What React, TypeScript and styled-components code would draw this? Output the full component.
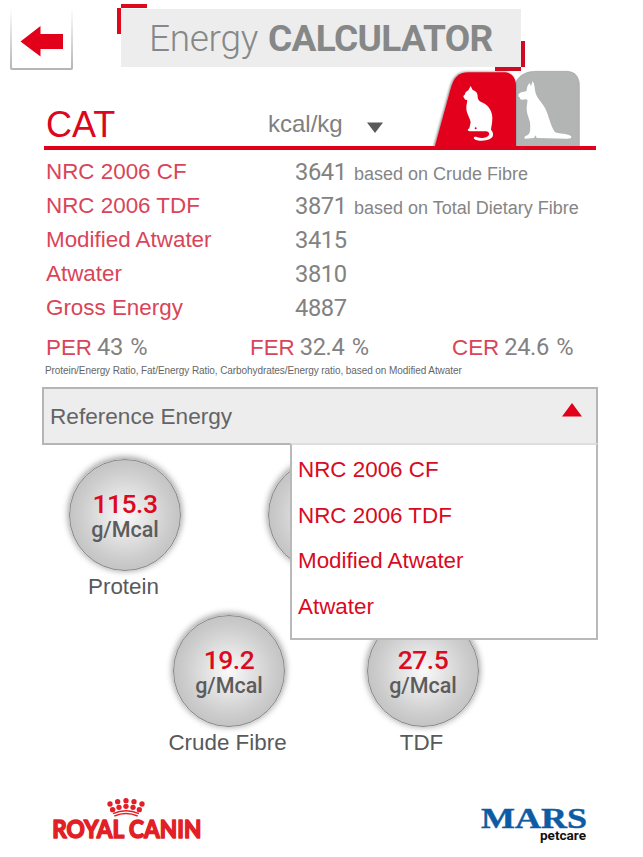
import React from "react";
import styled, { createGlobalStyle } from "styled-components";

const RED = "#e2001a";

const GlobalStyle = createGlobalStyle`
  * { box-sizing: border-box; }
  body { margin: 0; background: #fff; font-family: "Liberation Sans", Arial, sans-serif; }
`;

const Page = styled.main`
  width: 643px;
  height: 857px;
  background: #fff;
  overflow: hidden;
  display: flex;
  flex-direction: column;
`;

const Header = styled.header`
  height: 71px;
  padding: 8px 0 0 10px;
  display: flex;
  align-items: flex-start;
  flex: none;
`;

const BackButton = styled.button`
  width: 63px;
  height: 62px;
  padding: 0 2px 2px;
  border: 0;
  border-radius: 2px;
  background: linear-gradient(to bottom, #fff, #b4b4b4);
  svg { display: block; background: #fff; }
`;

const TitleBox = styled.div`
  position: relative;
  width: 400px;
  height: 58px;
  margin: 1px 0 0 48px;
  padding-left: 28px;
  background: #ededed;
  color: #868888;
  font: 300 37px/59px Roboto, sans-serif;
  white-space: nowrap;
  display: flex;
`;

const TitleLight = styled.span`
  font-weight: 300;
  letter-spacing: -0.3px;
  width: 119px;
`;

const TitleBold = styled.span`
  font-weight: 700;
  letter-spacing: -0.65px;
`;

const Corner = styled.i<{ $end?: boolean }>`
  position: absolute;
  width: 30px;
  height: 30px;
  ${(p) => (p.$end ? "right: -4px; bottom: -4px;" : "left: -4px; top: -5px;")}
  &::before, &::after {
    content: "";
    position: absolute;
    background: ${(p) => (p.$end ? "#cf0a22" : "#dd0a1e")};
  }
  &::before {
    width: 26px;
    height: 4px;
    ${(p) => (p.$end ? "left: 0; bottom: 0;" : "right: 0; top: 0;")}
  }
  &::after {
    width: 4px;
    height: 26px;
    ${(p) => (p.$end ? "right: 0; top: 0;" : "left: 0; bottom: 0;")}
  }
`;

const SpeciesBar = styled.section`
  height: 79px;
  margin: 0 47px 0 44px;
  border-bottom: 4px solid #df001c;
  display: flex;
  flex: none;
`;

const Species = styled.h1`
  margin: 0;
  width: 224px;
  padding-left: 2px;
  font-size: 36px;
  line-height: 40px;
  font-weight: 400;
  padding-top: 34px;
  color: #db0620;
`;

const Unit = styled.div`
  width: 118px;
  padding-top: 39px;
  display: flex;
  font-size: 24px;
  line-height: 28px;
  color: #808080;
  svg { margin: 12px 0 0 24px; flex: none; }
`;

const Tabs = styled.svg`
  display: block;
  margin: -6px 0 0 44px;
  flex: none;
`;

const Results = styled.section`
  padding: 5px 0 0 46px;
  flex: none;
`;

const ResultRow = styled.div`
  display: grid;
  grid-template-columns: 249px 59px auto;
  height: 34px;
  line-height: 33px;
  white-space: nowrap;
`;

const Label = styled.span`
  font-size: 22.4px;
  color: #d94558;
`;

const Value = styled.span`
  font: 450 23.7px/34px Roboto, sans-serif;
  letter-spacing: -0.4px;
  word-spacing: 2px;
  color: #828282;
`;

const Basis = styled.span`
  font-size: 18px;
  line-height: 38px;
  color: #858585;
`;

const Ratios = styled.div`
  display: grid;
  grid-template-columns: 204px 202px auto;
  height: 37px;
  padding-top: 5px;
  white-space: nowrap;
`;

const Ratio = styled.div`
  display: flex;
  gap: 5px;
  line-height: 35px;
`;

const Footnote = styled.p`
  margin: 2px 0 0 -1px;
  font-size: 10px;
  letter-spacing: -0.08px;
  line-height: 14px;
  color: #666;
`;

const Select = styled.section`
  position: relative;
  z-index: 2;
  width: 556px;
  height: 58px;
  margin: 9px 0 0 42px;
  padding: 0 14px 0 6px;
  border: 2px solid #b4b6b6;
  background: #ededed;
  display: flex;
  justify-content: space-between;
  color: #636466;
  font-size: 22.6px;
  line-height: 56px;
  flex: none;
  svg { margin-top: 14px; }
`;

const Menu = styled.ul`
  position: absolute;
  top: 54px;
  right: -2px;
  width: 308px;
  height: 197px;
  margin: 0;
  padding: 2px 0 0 6px;
  list-style: none;
  background: #fff;
  border: 2px solid #b8baba;
  border-top: 2px solid #dedede;
`;

const Option = styled.li`
  height: 45.5px;
  line-height: 45.5px;
  font-size: 22.4px;
  color: #d90a22;
`;

const Dials = styled.section<{ $indent: number; $gap: number; $top: number }>`
  display: flex;
  gap: ${(p) => p.$gap}px;
  padding: ${(p) => p.$top}px 0 0 ${(p) => p.$indent}px;
  height: ${(p) => 142 + p.$top}px;
  flex: none;
`;

const DialItem = styled.div`
  width: 112px;
  display: flex;
  flex-direction: column;
  align-items: center;
`;

const Dial = styled.div`
  width: 112px;
  height: 112px;
  border-radius: 50%;
  border: 1.5px solid #888;
  background: radial-gradient(circle closest-side, #fafafa 0%, #e6e6e6 35%, #cdcdcd 80%, #c4c4c4 100%);
  box-shadow: 0 -1px 6px 1px rgba(0, 0, 0, 0.38);
  display: flex;
  flex-direction: column;
  align-items: center;
  padding-top: 28px;
  flex: none;
  font-family: Roboto, sans-serif;
  font-weight: 500;
`;

const Amount = styled.span`
  font-size: 26.5px;
  line-height: 31px;
  letter-spacing: -0.5px;
  color: #dc0a20;
`;

const PerMcal = styled.span`
  font-size: 21.5px;
  line-height: 22px;
  color: #5c5c5c;
`;

const DialLabel = styled.span`
  margin: 2px 0 0 -3px;
  font-size: 22.4px;
  line-height: 28px;
  color: #58595b;
  white-space: nowrap;
`;

const Footer = styled.footer`
  display: flex;
  justify-content: space-between;
  padding: 0 53px 0 49px;
  margin-top: 37px;
`;

const results: [string, string, string?][] = [
  ["NRC 2006 CF", "3641", "based on Crude Fibre"],
  ["NRC 2006 TDF", "3871", "based on Total Dietary Fibre"],
  ["Modified Atwater", "3415"],
  ["Atwater", "3810"],
  ["Gross Energy", "4887"],
];

const ratios = [
  ["PER", "43 %"],
  ["FER", "32.4 %"],
  ["CER", "24.6 %"],
];

const options = ["NRC 2006 CF", "NRC 2006 TDF", "Modified Atwater", "Atwater"];

function Nutrient({ amount, label }: { amount?: string; label?: string }) {
  return (
    <DialItem>
      <Dial>
        {amount && (
          <>
            <Amount>{amount}</Amount>
            <PerMcal>g/Mcal</PerMcal>
          </>
        )}
      </Dial>
      {label && <DialLabel>{label}</DialLabel>}
    </DialItem>
  );
}

function SpeciesTabs() {
  return (
    <Tabs width="160" height="81" viewBox="0 0 480 243">
      <defs>
        <filter id="tabShadow" x="-10%" y="-10%" width="120%" height="120%">
          <feDropShadow dx="-3" dy="-1" stdDeviation="3" floodColor="#333" floodOpacity="0.6" />
        </filter>
      </defs>
      <path d="M258 246V50C270 28 292 19 320 19H408C434 19 448 34 448 62V246Z" fill="#b2b5b4" stroke="#9fa2a1" strokeWidth="2" />
      <path d="M14 246L61 74C71 38 84 22 116 22H220C247 22 258 38 258 64V246Z" fill={RED} filter="url(#tabShadow)" />
      <path
        fill="#fff"
        d="M122 63L128 75C138 78 144 85 143 97C145 108 150 110 160 114C178 123 187 141 187 160C187 174 184 184 183 194C190 202 192 212 184 219C173 228 143 231 132 221C130 216 135 214 142 217C155 221 172 219 177 210C180 204 174 199 167 199H119C112 198 112 193 118 190L122 172C120 158 110 147 109 131C108 120 113 112 111 105C105 105 103 102 103 99C99 96 99 92 104 89C106 82 110 78 115 76Z"
      />
      <circle cx="137" cy="190" r="3" fill={RED} />
      <path
        fill="#fff"
        d="M265 89L270 83L290 78C290 70 292 61 299 54L303 64L308 48C315 59 313 69 316 80C319 96 331 107 341 122C356 145 359 178 375 202C390 207 409 205 422 213C427 218 422 221 413 221L320 219L317 211L312 219L285 221C281 218 284 213 292 211C304 205 300 184 300 171C295 153 287 139 291 119C292 110 295 104 288 103L275 104C267 101 272 97 266 95Z"
      />
    </Tabs>
  );
}

function RoyalCaninLogo() {
  const beads = [
    [240, 72], [263, 65], [288, 62], [312, 65], [336, 72],
    [248, 89], [267, 82], [288, 79], [309, 82], [328, 89],
  ];
  return (
    <svg width="160" height="52" viewBox="49 794 160 52">
      <g transform="translate(30 780) scale(.3333)" fill="#e21f26">
        {beads.map(([x, y], i) => (
          <circle key={i} cx={x} cy={y} r={8} />
        ))}
        <path d="M249 101Q288 84 327 101M253 108Q288 93 323 108" fill="none" stroke="#e21f26" strokeWidth="4.5" />
      </g>
      <text
        x="52.3" y="838.3" textLength="149" lengthAdjust="spacingAndGlyphs"
        fontFamily="Lato, sans-serif" fontWeight="700" fontSize="24.5"
        fill="#e21f26" stroke="#e21f26" strokeWidth="1.6" strokeLinejoin="round"
      >
        ROYAL CANIN
      </text>
    </svg>
  );
}

function MarsLogo() {
  return (
    <svg width="112" height="52" viewBox="478 794 112 52">
      <text
        x="481" y="828" textLength="106" lengthAdjust="spacingAndGlyphs"
        fontFamily="Liberation Serif, serif" fontWeight="700" fontSize="29.5" fill="#0d5ba3"
        stroke="#0d5ba3" strokeWidth="0.4"
      >
        MARS
      </text>
      <text
        x="540" y="839.5" textLength="46" lengthAdjust="spacingAndGlyphs"
        fontFamily="Roboto, sans-serif" fontWeight="700" fontSize="13.5" fill="#111"
      >
        petcare
      </text>
    </svg>
  );
}

export default function App() {
  return (
    <Page>
      <GlobalStyle />
      <Header>
        <BackButton aria-label="Back">
          <svg width="59" height="60" viewBox="12 8 59 60">
            <path d="M20.5 41.5L40.5 26V34H63V49H40.5V56.5Z" fill={RED} />
          </svg>
        </BackButton>
        <TitleBox>
          <Corner />
          <TitleLight>Energy</TitleLight>
          <TitleBold>CALCULATOR</TitleBold>
          <Corner $end />
        </TitleBox>
      </Header>

      <SpeciesBar>
        <Species>CAT</Species>
        <Unit>
          kcal/kg
          <svg width="16" height="11" viewBox="0 0 16 11">
            <path d="M0 0.5H16L8 11Z" fill="#58595b" />
          </svg>
        </Unit>
        <SpeciesTabs />
      </SpeciesBar>

      <Results>
        {results.map(([name, value, basis]) => (
          <ResultRow key={name}>
            <Label>{name}</Label>
            <Value>{value}</Value>
            {basis && <Basis>{basis}</Basis>}
          </ResultRow>
        ))}
        <Ratios>
          {ratios.map(([name, value]) => (
            <Ratio key={name}>
              <Label>{name}</Label>
              <Value>{value}</Value>
            </Ratio>
          ))}
        </Ratios>
        <Footnote>
          Protein/Energy Ratio, Fat/Energy Ratio, Carbohydrates/Energy ratio, based on Modified Atwater
        </Footnote>
      </Results>

      <Select>
        Reference Energy
        <svg width="20" height="14" viewBox="0 0 20 14">
          <path d="M10 0L20 13.5H0Z" fill={RED} />
        </svg>
        <Menu>
          {options.map((o) => (
            <Option key={o}>{o}</Option>
          ))}
        </Menu>
      </Select>

      <Dials $indent={69} $gap={87} $top={14}>
        <Nutrient amount="115.3" label="Protein" />
        <Nutrient />
      </Dials>
      <Dials $indent={173} $gap={82} $top={14}>
        <Nutrient amount="19.2" label="Crude Fibre" />
        <Nutrient amount="27.5" label="TDF" />
      </Dials>

      <Footer>
        <RoyalCaninLogo />
        <MarsLogo />
      </Footer>
    </Page>
  );
}
